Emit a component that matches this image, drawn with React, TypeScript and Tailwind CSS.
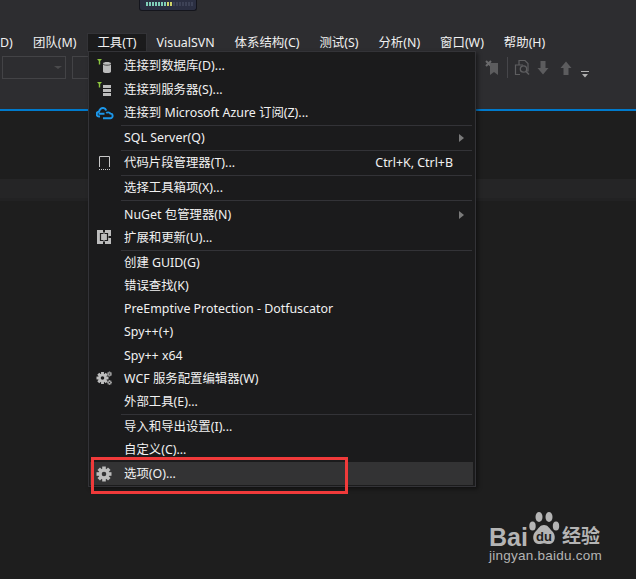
import React from "react";

const font = { fontFamily: '"Noto Sans", "Noto Sans CJK SC", sans-serif' };

function Funnel() {
  return <path d="M1 1h5L4.200 3v3.500H2.800V3z" fill="#8dc63f" />;
}
function DbIcon() {
  return (
    <svg width="20" height="18" viewBox="0 0 20 18">
      <Funnel />
      <path d="M7 5.500C7 4.500 8.800 4 11 4s4 .5 4 1.500v8c0 1-1.800 1.500-4 1.500s-4-.5-4-1.500z" fill="#bcbcbc" />
      <path d="M7 5.800c0 .9 1.800 1.400 4 1.400s4-.5 4-1.400" fill="none" stroke="#2a2a2a" strokeWidth=".8" />
    </svg>
  );
}
function ServerIcon() {
  return (
    <svg width="20" height="18" viewBox="0 0 20 18">
      <Funnel />
      <rect x="7" y="4" width="8" height="3" fill="#bcbcbc" />
      <rect x="7" y="8" width="8" height="3" fill="#bcbcbc" />
      <rect x="7" y="12" width="8" height="3" fill="#bcbcbc" />
    </svg>
  );
}
function CloudIcon() {
  return (
    <svg width="20" height="18" viewBox="0 0 20 18">
      <path d="M4 12.500H3.200a2.400 2.400 0 0 1-.2-4.800C3.600 5.200 5.500 3.500 7.500 4c1.500.3 2.300 1.300 2.700 2.500" fill="none" stroke="#1c97ea" strokeWidth="2" />
      <path d="M2.500 9.800h6M7 14.200h7.300a2.300 2.300 0 0 0 .1-4.600c-1-1.400-3-1.600-4.200-.6" fill="none" stroke="#1c97ea" strokeWidth="1.900" />
    </svg>
  );
}
function SnippetIcon() {
  return (
    <svg width="20" height="18" viewBox="0 0 20 18">
      <path d="M3.500 13V2.500h10V13" fill="none" stroke="#c8c8c8" />
      <path d="M3 15.500h11" fill="none" stroke="#c8c8c8" strokeDasharray="1 1" />
    </svg>
  );
}
function ExtIcon() {
  return (
    <svg width="20" height="18" viewBox="0 0 20 18">
      <rect x="1" y="1" width="14" height="14" fill="#bdbdbd" />
      <rect x="7" y="1" width="2" height="2.500" fill="#1b1b1c" />
      <rect x="7" y="12.500" width="2" height="2.500" fill="#1b1b1c" />
      <rect x="12.500" y="7" width="2.500" height="2" fill="#1b1b1c" />
      <path d="M7.500 4.500H4.500v7h3M8.500 4.500h3v7h-3" fill="none" stroke="#1b1b1c" strokeWidth="1.200" />
    </svg>
  );
}
function GearPath({ cx, cy, r, hole, fill }: { cx: number; cy: number; r: number; hole: number; fill: string }) {
  const teeth = [0, 45, 90, 135, 180, 225, 270, 315];
  const mid = (r * 0.72 + hole) / 2;
  return (
    <g>
      {teeth.map((a) => (
        <rect
          key={a}
          x={cx - r * 0.24}
          y={cy - r}
          width={r * 0.48}
          height={r * 0.5}
          fill={fill}
          transform={`rotate(${a} ${cx} ${cy})`}
        />
      ))}
      <circle cx={cx} cy={cy} r={mid} fill="none" stroke={fill} strokeWidth={r * 0.72 - hole} />
    </g>
  );
}
function WcfIcon() {
  return (
    <svg width="20" height="18" viewBox="0 0 20 18">
      <GearPath cx={6.500} cy={8} r={6} hole={1.800} fill="#bdbdbd" />
      <GearPath cx={13.500} cy={4} r={2.500} hole={0.600} fill="#9a9a9a" />
      <GearPath cx={13.500} cy={12.500} r={2.500} hole={0.600} fill="#9a9a9a" />
    </svg>
  );
}
function OptIcon() {
  return (
    <svg width="20" height="18" viewBox="0 0 20 18">
      <GearPath cx={8} cy={9} r={7.500} hole={2.300} fill="#bcbcbc" />
    </svg>
  );
}

type Item =
  | { sep: true; size: "mid" | "wide" }
  | { sep?: false; label: string; icon?: React.ReactNode; shortcut?: string; sub?: boolean; active?: boolean };

const sepHeight = { mid: "h-[2px]", wide: "h-[3px]" };

const items: Item[] = [
  { label: "连接到数据库(D)...", icon: <DbIcon /> },
  { label: "连接到服务器(S)...", icon: <ServerIcon /> },
  { label: "连接到 Microsoft Azure 订阅(Z)...", icon: <CloudIcon /> },
  { sep: true, size: "mid" },
  { label: "SQL Server(Q)", sub: true },
  { sep: true, size: "mid" },
  { label: "代码片段管理器(T)...", icon: <SnippetIcon />, shortcut: "Ctrl+K, Ctrl+B" },
  { sep: true, size: "mid" },
  { label: "选择工具箱项(X)..." },
  { sep: true, size: "wide" },
  { label: "NuGet 包管理器(N)", sub: true },
  { label: "扩展和更新(U)...", icon: <ExtIcon /> },
  { sep: true, size: "mid" },
  { label: "创建 GUID(G)" },
  { label: "错误查找(K)" },
  { label: "PreEmptive Protection - Dotfuscator" },
  { label: "Spy++(+)" },
  { label: "Spy++ x64" },
  { label: "WCF 服务配置编辑器(W)", icon: <WcfIcon /> },
  { label: "外部工具(E)..." },
  { sep: true, size: "mid" },
  { label: "导入和导出设置(I)..." },
  { label: "自定义(C)..." },
  { label: "选项(O)...", icon: <OptIcon />, active: true },
];

const menuBar = ["团队(M)", "工具(T)", "VisualSVN", "体系结构(C)", "测试(S)", "分析(N)", "窗口(W)", "帮助(H)"];
const meterOn = ["a", "b", "c", "d", "e", "f", "g", "h", "i"];
const meterOff = ["j", "k", "l", "m", "n", "o", "p"];

export default function App() {
  return (
    <div className="relative w-[636px] h-[579px] overflow-hidden bg-[#1e1e1e] text-[12.400px] leading-none text-[#f1f1f1]" style={font}>
      {/* chrome */}
      <div className="h-[111px] bg-[#2d2d30] border-b-2 border-[#007acc] flex flex-col">
        <div className="h-[33px] flex pl-[139px]">
          <div className="w-[58px] h-[11px] rounded-b-[3px] border border-t-0 border-[#14151c] bg-[#2b2f42] flex items-start gap-[1px] pl-[6px] pt-[2px]">
            {meterOn.map((k, i) => (
              <span key={k} className={i < 7 ? "w-[2px] h-[4px] bg-[#7fcdb8]" : "w-[2px] h-[4px] bg-[#cfd36a]"} />
            ))}
            {meterOff.map((k) => (
              <span key={k} className="w-[2px] h-[4px] bg-[#3d4256]" />
            ))}
          </div>
        </div>
        <div className="h-[19px] flex items-center">
          <div className="w-[23px] h-[19px] pt-[1px] flex items-center whitespace-nowrap">D)</div>
          {menuBar.map((m) => (
            <div
              key={m}
              className={
                m === "工具(T)"
                  ? "h-[19px] px-[9px] ml-[1px] pt-[1px] flex items-center bg-[#1b1b1c] border border-b-0 border-[#333337] whitespace-nowrap"
                  : "h-[19px] px-[10px] pt-[1px] flex items-center whitespace-nowrap"
              }
            >
              {m}
            </div>
          ))}
        </div>
        <div className="flex-1 flex items-start pt-[4px] pl-[2px]">
          <div className="w-[64px] h-[23px] border border-[#434346] flex items-center justify-end pr-[3px]">
            <span className="w-0 h-0 border-x-[4px] border-x-transparent border-t-[3px] border-t-[#4a4a4c]" />
          </div>
          <div className="ml-[6px] w-[30px] h-[23px] border border-[#434346]" />
          <div className="ml-auto flex items-start pr-[47px] pt-[4px]">
            <svg width="14" height="16" viewBox="0 0 14 16">
              <path d="M1 1l5 5M6 1L1 6" stroke="#6a6a6c" strokeWidth="2" />
              <path d="M5 3h8v12l-4-3-4 3z" fill="#5c5c5e" />
            </svg>
            <div className="ml-[8px] w-px h-[21px] -mt-[3px] bg-[#46464a]" />
            <svg width="18" height="18" viewBox="0 0 18 18" className="ml-[6px] -mt-[1px]">
              <path d="M5 6V1.500h6l3 3V12h-2M6 15.500H1.500V6H9" fill="none" stroke="#5e5e60" strokeWidth="1.200" />
              <circle cx="9.500" cy="10" r="3.200" fill="none" stroke="#5e5e60" strokeWidth="1.300" />
              <path d="M12 12.500l3 3" stroke="#5e5e60" strokeWidth="1.600" />
            </svg>
            <svg width="14" height="16" viewBox="0 0 14 16" className="ml-[4px]">
              <path d="M4.500 1h5v7h3L7 14.500 1.500 8h3z" fill="#5c5c5e" />
            </svg>
            <svg width="14" height="16" viewBox="0 0 14 16" className="ml-[9px]">
              <path d="M4.500 15h5V8h3L7 1.500 1.500 8h3z" fill="#5c5c5e" />
            </svg>
            <svg width="8" height="8" viewBox="0 0 8 8" className="mt-[11px] ml-[8px]">
              <path d="M0 .5h8" stroke="#b0b0b0" />
              <path d="M1 3h6L4 6.500z" fill="#b0b0b0" />
            </svg>
          </div>
        </div>
      </div>

      {/* editor */}
      <div className="mt-[68px] h-[22px] bg-[#252526] border-b-[3px] border-[#222223]" />

      {/* dropdown */}
      <div className="absolute left-[88px] top-[51px] w-[388px] h-[436px] bg-[#1b1b1c] border border-[#333337] shadow-[2px_2px_4px_rgba(0,0,0,0.45)] pt-[3px] pr-[2px] pl-[1px] flex flex-col">
        {items.map((it, i) =>
          it.sep ? (
            <div key={i} className={`${sepHeight[it.size]} ml-[31px] mr-[1px] flex items-start shrink-0`}>
              <div className="h-px w-full bg-[#333337]" />
            </div>
          ) : (
            <div key={i} className={`h-[23.200px] shrink-0 flex items-center whitespace-nowrap ${it.active ? "bg-[#333334]" : ""}`}>
              <div className="w-[34px] pl-[6px] flex items-center justify-start shrink-0">{it.icon}</div>
              <span>{it.label}</span>
              {it.shortcut && <span className="ml-auto mr-[20px]">{it.shortcut}</span>}
              {it.sub && (
                <span className="ml-auto mr-[9px] w-0 h-0 border-y-[4px] border-y-transparent border-l-[5px] border-l-[#7a7a7a]" />
              )}
            </div>
          ),
        )}
      </div>

      {/* annotation */}
      <div className="absolute left-[91px] top-[457px] w-[257px] h-[37px] border-[3px] border-[#f03a3a]" />

      {/* watermark */}
      <div className="absolute left-[489px] top-[511px] w-[116px] text-[#b4b4b4] flex flex-col" style={{ fontFamily: '"Liberation Sans", "Noto Sans CJK SC", sans-serif' }}>
        <div className="flex items-end h-[36px]">
          <span className="text-[25px] font-bold leading-[20px]">Bai</span>
          <svg width="34" height="36" viewBox="0 0 34 36" className="-ml-[1px]">
            <ellipse cx="5.500" cy="15" rx="3.200" ry="4.500" fill="#b4b4b4" />
            <ellipse cx="12" cy="6" rx="3.500" ry="5" fill="#b4b4b4" />
            <ellipse cx="22" cy="6" rx="3.500" ry="5" fill="#b4b4b4" />
            <ellipse cx="29" cy="15" rx="3.200" ry="4.500" fill="#b4b4b4" />
            <path d="M17 14c4 0 5 3 8 6 4 3 4 12-2 13-3 .5-4-.8-6-.8s-3 1.300-6 .8c-6-1-6-10-2-13 3-3 4-6 8-6z" fill="#b4b4b4" />
            <text x="17" y="30" textAnchor="middle" fontSize="13" fontWeight="700" fill="#1e1e1e">du</text>
          </svg>
          <span className="text-[19px] font-bold leading-[20px] ml-[1px]">经验</span>
        </div>
        <div className="text-[13.500px] leading-[14px] mt-[2px] tracking-[0.25px] whitespace-nowrap">jingyan.baidu.com</div>
      </div>
    </div>
  );
}
